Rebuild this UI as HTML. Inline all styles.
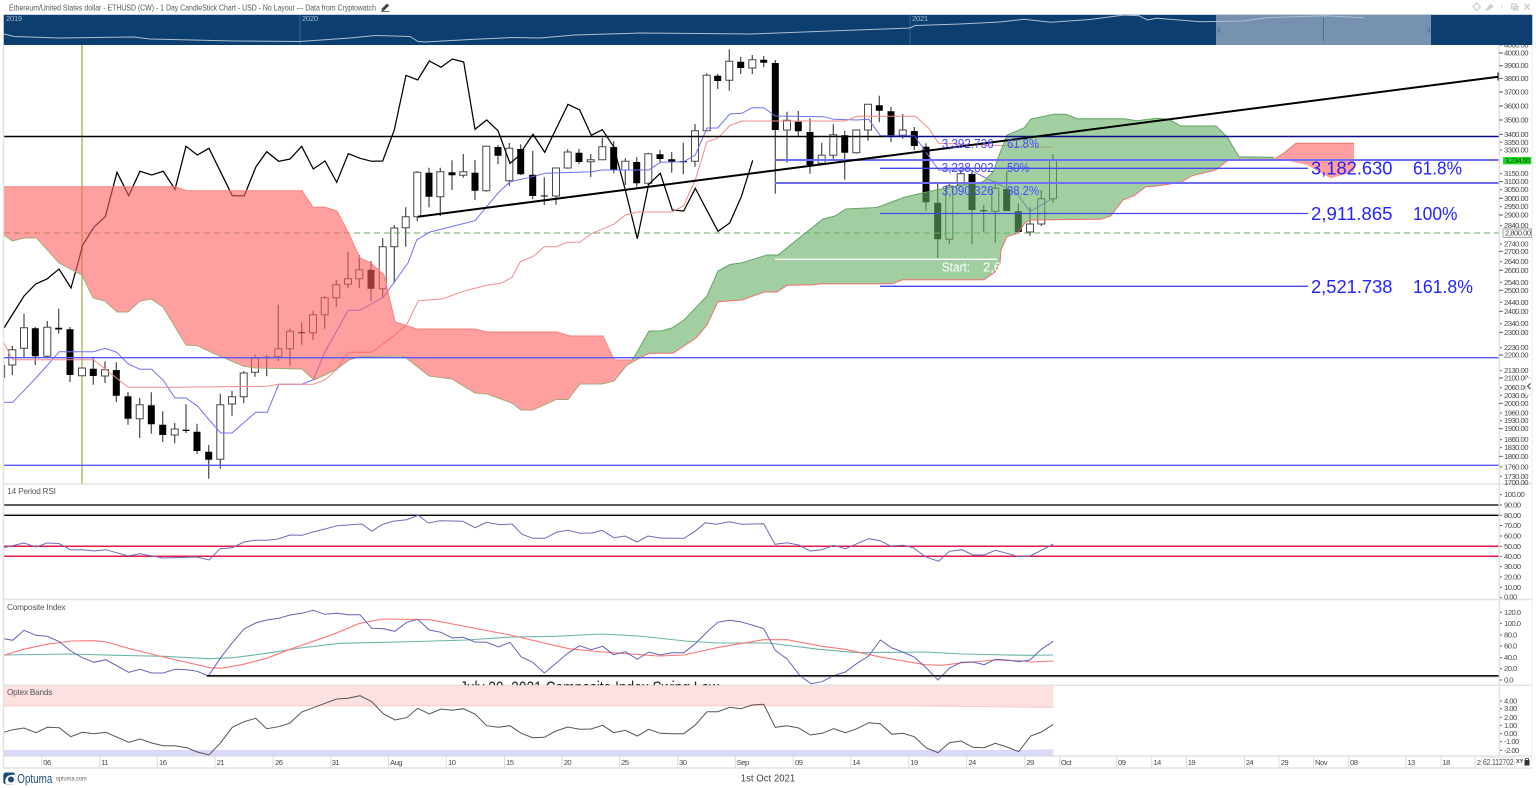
<!DOCTYPE html>
<html><head><meta charset="utf-8"><title>ETHUSD Chart</title>
<style>
html,body{margin:0;padding:0;background:#fff;width:1536px;height:788px;overflow:hidden}
svg{display:block;font-family:"Liberation Sans",sans-serif;filter:blur(.35px)}
text{dominant-baseline:central}
.ax{font-size:7.7px;letter-spacing:-.55px;fill:#4a4a4a}
.lb{font-size:8.2px;fill:#555;letter-spacing:-.2px}
.big{font-size:18.5px;fill:#2424ff}
.fib{font-size:13px;fill:#4a4aff}
</style></head><body>
<svg width="1536" height="788" viewBox="0 0 1536 788" xmlns="http://www.w3.org/2000/svg">
<defs><clipPath id="cp"><rect x="0" y="600" width="1536" height="85.3"/></clipPath></defs>
<rect width="1536" height="788" fill="#fff"/>

<!-- title -->
<text x="9" y="7.5" font-size="8.6" fill="#555" textLength="367" lengthAdjust="spacingAndGlyphs">Ethereum/United States dollar - ETHUSD (CW) - 1 Day CandleStick Chart - USD - No Layout --- Data from Cryptowatch</text>
<path d="M382 9L387 4l1.6 1.5-5 5H382zM381 11.6h8.4" fill="#444" stroke="#444" stroke-width=".7"/>

<!-- window icons -->
<g fill="none" stroke="#cfcfcf" stroke-width="1.2">
<path d="M1476.7 3l3.7 3.7-3.7 3.7-3.7-3.7z"/>
<path d="M1486 10l2.5-3 2-2.500 2.500 2-2.500 1.500-1.500 1.500z" fill="#cfcfcf"/>
<path d="M1502 4v5" stroke="#e4e4e4"/>
<path d="M1511.500 4h5v4.500h-5zM1513.500 6.500h4.500v3.500h-4.500z"/>
<path d="M1524.500 4l5 5.500M1529.500 4l-5 5.500" stroke-width="1.500"/>
</g>

<!-- olive vertical -->
<path d="M82 45V484" stroke="#c9c98c" stroke-width="2"/>

<!-- wicks -->
<path fill="none" stroke="#484848" stroke-width="1.200" d="M4.500 365V378M12.300 346V375M24 313.700V358M35.300 327V365M47.300 321V357M58.700 308.700V333.700M70 327V382M93.300 358V384.700M105 361.300V383M116.300 362.300V402M128 392V424.700M139.700 398V438M151.300 392.300V433.700M162.700 411.300V442M174.700 423V443.300M186 404.300V433M197 423.700V454M208.700 445V478.700M220.300 393.700V468.700M232 391V415.700M243.700 371V403.300M255 354.700V376.700M266.700 355.300V376.300M278.300 304.700V361M290 328.700V365.700M301.700 322.300V344.700M313 310.700V339.700M324.700 296.300V328.700M336.300 280.300V307M348 251.700V288M359.300 255V288M371 261V301M382.700 238.300V298M394.300 225V283M405.700 207.300V246.700M417.300 171V221M429 167.700V207.300M440.300 167.700V216M452 160.300V190M463.300 154V177.700M475 160V200M486.300 145.700V191.700M498 145V164.300M509.300 143V186M520.700 144.300V175M532.700 151V199M544.300 177.300V205M556 167.700V204.700M567.700 149.300V168.700M579 149V164M590.700 154V177M602.300 138V160M613.700 141V173.300M625.300 158.300V185M636.700 157.300V186.700M648.300 152.700V186.700M660 150V162.700M671.700 152V172.700M683.300 142.700V174.300M695 124V166.700M706.700 73.300V130.700M717.700 74V89M729.300 49.300V90.700M740.700 56.700V74M752.300 55V74M763.700 56V67.300M775.300 60V193.700M787 111.700V162.700M798.300 111V135.700M810 118.300V173.700M821.700 142.700V164.300M833.300 124.300V159.300M844.700 130.700V179.700M856.300 129.300V153.700M868 103.700V140.700M879.300 95.700V122.300M891 107V142M902.700 114V138.700M914.300 127V150M926 143.300V210.700M937.700 181.700V258M949.300 184V244M960.700 170V187M972 170V244.300M983.700 205V232.300M995.300 180.700V242.700M1006.700 171V211M1018.300 203.300V233.300M1030 207.300V235.700M1041.300 190V226M1053 154V202.700"/>
<!-- white bodies -->
<path fill="#fff" stroke="#484848" stroke-width="1" d="M8.800 349.700h7V365h-7zM20.500 327.700h7V348.300h-7zM43.800 327.300h7V356.300h-7zM78.500 368h7V375.700h-7zM101.500 369.700h7V376h-7zM136.200 404.700h7V418.700h-7zM171.200 429h7V435h-7zM216.800 404.700h7V459.300h-7zM228.500 396.700h7V404h-7zM240.200 373h7V396.700h-7zM251.500 358.300h7V372.300h-7zM274.800 348.700h7V356.700h-7zM286.500 331.300h7V348.700h-7zM309.500 314.700h7V332.700h-7zM321.200 297.700h7V314.700h-7zM332.800 284.700h7V297.700h-7zM344.500 278.700h7V284.300h-7zM355.800 269.700h7V278.700h-7zM379.200 246.700h7V288.700h-7zM390.800 228h7V246.700h-7zM402.200 216.700h7V227.700h-7zM413.800 172.300h7V216.700h-7zM436.800 171.700h7V196.700h-7zM459.800 171.700h7V175.300h-7zM482.800 146.300h7V190.700h-7zM505.800 148.300h7V180.700h-7zM552.500 168h7V196h-7zM564.200 152h7V168h-7zM587.200 159.700h7V161.700h-7zM598.800 146.700h7V159.700h-7zM621.800 161.300h7V170h-7zM644.800 153.700h7V183.300h-7zM691.500 130.700h7V161.300h-7zM703.200 75.300h7V130.700h-7zM725.800 61.300h7V80.300h-7zM748.800 59.700h7V68h-7zM783.500 120.300h7V130h-7zM818.200 155.300h7V163.300h-7zM829.800 134.700h7V155.300h-7zM852.800 130h7V152.700h-7zM864.500 104.300h7V130h-7zM899.200 130h7V135.300h-7zM945.800 186h7V239.300h-7zM957.200 173.700h7V185h-7zM991.800 188.300h7V211.300h-7zM1026.500 224h7V232h-7zM1037.800 198.700h7V224h-7zM1049.500 160.300h7V198.700h-7z"/>
<!-- black bodies -->
<path fill="#000" d="M31.800 328.300h7V356.300h-7zM55.200 327.700h7V329.500h-7zM66.500 329.300h7V375h-7zM89.800 368.700h7V376h-7zM112.800 370h7V395.700h-7zM124.500 396.300h7V418.700h-7zM147.800 405.300h7V424.300h-7zM159.200 424.700h7V435h-7zM182.500 429.700h7V431h-7zM193.500 431.700h7V451h-7zM205.200 451.700h7V459.700h-7zM263.200 356.700h7V358.300h-7zM298.200 332h7V333.200h-7zM367.500 269.700h7V288.700h-7zM425.500 172.700h7V196.700h-7zM448.500 172.300h7V175.300h-7zM471.500 172.700h7V190.700h-7zM494.500 147h7V155.700h-7zM517.200 149h7V174.300h-7zM529.200 174.700h7V196h-7zM540.800 195.500h7V196.500h-7zM575.500 152.700h7V162h-7zM610.200 147h7V170h-7zM633.200 162h7V183.300h-7zM656.500 154.300h7V159h-7zM668.200 159.300h7V162.300h-7zM679.800 161h7V162.200h-7zM714.200 75.700h7V81h-7zM737.200 61.700h7V68h-7zM760.200 59.700h7V62.700h-7zM771.800 63h7V130h-7zM794.800 121.700h7V131.300h-7zM806.500 132h7V165h-7zM841.200 135.300h7V152.700h-7zM875.800 105.300h7V110.700h-7zM887.500 111.300h7V135.700h-7zM910.800 131h7V146h-7zM922.500 146.700h7V202.300h-7zM934.200 202.700h7V239.300h-7zM968.500 174h7V210h-7zM980.200 210h7V211.300h-7zM1003.200 189h7V211h-7zM1014.800 211.300h7V232h-7z"/>

<!-- ichimoku lines (beneath cloud) -->
<path d="M4 233H1499" stroke="#66a866" stroke-width="1" stroke-dasharray="6 4" fill="none"/>
<polyline fill="none" stroke="#000" stroke-width="1.250" stroke-linejoin="miter" points="4,328 24,296 35.700,284 47,279 59,269 71,288 78,263 82.700,245 94.300,226.700 105.300,216.700 117,172.300 128.700,195.700 140,171.300 151.700,175 163.300,171.300 175,189.300 186,146.300 197.300,155 209,148.300 232.300,195.700 244.300,195.700 256,166.700 266.700,151.700 278.700,161.300 290,159 301.700,146.300 313.300,169 325,161 336.700,182.300 348.300,153.700 360,158.300 371.700,161.300 382.700,161 394.300,130 406,75.300 417.700,80 429.300,61 441,67.300 452.300,59 463.700,62 475,129.300 486.700,120 498,130.700 510,163.300 518,156.700 533,134.300 544.700,152.300 568,104.300 579.700,110 591.300,135.300 602.300,129.700 613.700,146.700 625.300,190 637.300,238.700 648.700,184.300 660.300,173.300 672.300,210 683.700,211 695.300,188.300 718,231.300 729.700,223 741.300,196.700 752.700,160.300"/>
<polyline fill="none" stroke="#6f6ffa" stroke-width="1" points="4,402.300 12.700,402.300 36,378 59.300,351.700 93.300,351.700 105.300,348.300 116.700,352.300 128.300,364 140,369.300 151.700,369.300 163.300,380.300 175,398 186,398 197.700,406.300 209,419.700 220.700,433 232,433 255.700,412.300 267.300,412.300 278.700,384.300 301.700,384.300 313.300,379.700 325,352 348.300,310.300 360,310.300 383.300,297.300 408,263 416.700,240 430,232 475,220.700 498.300,192.700 510,181.700 528.700,177.700 545.300,173.300 592,171.700 602,170 648.700,170 660.300,162.300 683.700,161.700 695.300,155 707,128 717.700,128 729.700,114 742,113.300 752,107.700 763.700,107.700 775.300,116 823.700,116.700 833.700,119.300 857,120 868.700,119.300 880.300,135.700 914.300,135.700 938.700,170 970,170 996.700,183.300 1016.700,193 1030,211.700 1053,198"/>
<polyline fill="none" stroke="#f58a8a" stroke-width="1" points="4,343 12.700,359.700 93.300,359.700 128.300,387.300 175,387.300 267,386.300 278.300,384.300 313.300,384.300 325,379.700 336.700,369.700 348.300,352.300 371.700,352.300 393.300,336.300 406.700,324.700 418.300,300.700 441.700,299 463.300,291.300 486.700,285.300 501.700,283 512,277.300 520.300,261.700 532.700,256.700 544.300,246.700 556,246.700 567.700,242.300 579.700,242.300 592,233.300 613.700,224.300 625.300,215 637.300,212 672,212 683.700,205.700 695.300,180 707,141.700 717.700,138.300 729.700,125.700 742,121 845.300,121 857,116.300 915.300,116.300 928.700,128.300 938.700,143.300 1037,147 1053,147.300"/>

<!-- clouds -->
<path fill="rgb(255,95,95)" fill-opacity=".6" d="M4 186.700L175 186.700 187 190.700 302 190.700 313 207.300 325 207.300 337 211 348 232 360 258 371 263 384 275 395 321.700 405.700 325.300 417 329 475 329 487 332 557 332 570 336 603 336 614 360 632 360 640 358 627 365 614 381 602 384 580 384 568 399.500 556 399.500 533 410 521 410 512 403 487 394 475 393 452 379 429 376 405 357 400 356 360 356.700 349 360 337 369 325 375 314 380 302 369 255 368 243 366 213 353 197 345.600 186 345 163 307 151 299 140 301 128 312 117 312 105 301 93 298 82 275 59 263 36.700 238 24 238 12.300 241 4 235z"/>
<path fill="rgb(100,175,100)" fill-opacity=".6" d="M632 360L636 354 649 331 661 331 672 328 684 320 707 296 718 271 730 264.500 742 262.700 767 255 778 255 823 219 835 216 846 209 877 207.500 905 197 927 192 972 183 983 182 993 172 1000 153 1007 135 1024 128 1031 119 1054 114.300 1066 114.300 1077 118.700 1124 118.700 1137 120.700 1157 118.300 1169 119.300 1181 126 1216 126 1227 136.700 1239 156.700 1274 157.300 1274 159.300 1237 159.300 1227 161 1215.700 170 1192 175.700 1180.700 182.300 1157 186 1145.700 186.700 1134 195.700 1123 200 1110.700 216 1100.700 219.300 1030 220 1025 223 1018 233 1007 236.700 1001 250 1000 263 995 272 984 279.700 903 279.700 892 283.700 822 283.700 812 284.700 787 285.300 777 292 764 292 742 300 718 301.700 707 325 696 338 673 353.300 649 353.300 640 358z"/>
<path fill="rgb(255,95,95)" fill-opacity=".6" d="M1274 159L1284 153 1296 143.300 1354 143.300 1354 171.700 1330.700 178.300 1307 165 1284 160z"/>
<!-- cloud edges -->
<g fill="none" stroke-width="1">
<polyline stroke="#f98080" points="4,186.700 175,186.700 187,190.700 302,190.700 313,207.300 325,207.300 337,211 348,232 360,258 371,263 384,275 395,321.700 405.700,325.300 417,329 475,329 487,332 557,332 570,336 603,336 614,360 632,360"/>
<polyline stroke="#a9a878" points="4,235 12.300,241 24,238 36.700,238 59,263 82,275 93,298 105,301 117,312 128,312 140,301 151,299 163,307 186,345 197,345.600 213,353 243,366 255,368 302,369 314,380 325,375 337,369 349,360 360,356.700 400,356 405,357 429,376 452,379 475,393 487,394 512,403 521,410 533,410 556,399.500 568,399.500 580,384 602,384 614,381 627,365 640,358"/>
<polyline stroke="#62a562" points="632,360 636,354 649,331 661,331 672,328 684,320 707,296 718,271 730,264.500 742,262.700 767,255 778,255 823,219 835,216 846,209 877,207.500 905,197 927,192 972,183 983,182 993,172 1000,153 1007,135 1024,128 1031,119 1054,114.300 1066,114.300 1077,118.700 1124,118.700 1137,120.700 1157,118.300 1169,119.300 1181,126 1216,126 1227,136.700 1239,156.700 1274,157.300"/>
<polyline stroke="#f56e6e" points="640,358 649,353.300 673,353.300 696,338 707,325 718,301.700 742,300 764,292 777,292 787,285.300 812,284.700 822,283.700 892,283.700 903,279.700 984,279.700 995,272 1000,263 1001,250 1007,236.700 1018,233 1025,223 1030,220 1100.700,219.300 1110.700,216 1123,200 1134,195.700 1145.700,186.700 1157,186 1180.700,182.300 1192,175.700 1215.700,170 1227,161 1237,159.300 1274,159.300 1284,153 1296,143.300 1354,143.300"/>
</g>

<!-- horizontal levels -->
<path d="M4 136.500H885" stroke="#000" stroke-width="1.600"/>
<path d="M885 136.500H1499" stroke="#0a0a8c" stroke-width="1.600"/>
<path d="M775 160H1499M775 183H1499" stroke="#6d6df5" stroke-width="2"/>
<path d="M880 168.300H1308M880 213.500H1308M880 286.300H1308" stroke="#4646f0" stroke-width="1.300"/>
<path d="M4 357.700H1499M4 465.300H1499" stroke="#5a5aff" stroke-width="1.300"/>
<path d="M775 259.300H997" stroke="#fff" stroke-width="1.300"/>

<!-- trendline -->
<path d="M417.700 216.700L1498.300 76.700" stroke="#000" stroke-width="2" fill="none"/>
<path d="M1498.300 72.500V80.500" stroke="#000" stroke-width="1.600"/>

<!-- fib labels -->
<text class="fib" x="941.700" y="143.300" textLength="52" lengthAdjust="spacingAndGlyphs">3,392.736</text>
<text class="fib" x="1007" y="143.300" textLength="32" lengthAdjust="spacingAndGlyphs">61.8%</text>
<text class="fib" x="941.700" y="167.300" textLength="52" lengthAdjust="spacingAndGlyphs">3,238.002</text>
<text class="fib" x="1007" y="167.300" textLength="22.500" lengthAdjust="spacingAndGlyphs">50%</text>
<text class="fib" x="941.700" y="190.500" textLength="52" lengthAdjust="spacingAndGlyphs">3,090.326</text>
<text class="fib" x="1007" y="190.500" textLength="32" lengthAdjust="spacingAndGlyphs">38.2%</text>
<text x="941.700" y="267" font-size="13" fill="#fff" textLength="28.500" lengthAdjust="spacingAndGlyphs">Start:</text>
<text x="983" y="267" font-size="13" fill="#fff">2,6</text>
<text class="big" x="1311" y="168" textLength="81.500" lengthAdjust="spacingAndGlyphs">3,182.630</text>
<text class="big" x="1413" y="168" textLength="49" lengthAdjust="spacingAndGlyphs">61.8%</text>
<text class="big" x="1311" y="213.500" textLength="81.500" lengthAdjust="spacingAndGlyphs">2,911.865</text>
<text class="big" x="1413" y="213.500" textLength="44.500" lengthAdjust="spacingAndGlyphs">100%</text>
<text class="big" x="1311" y="286.300" textLength="81.500" lengthAdjust="spacingAndGlyphs">2,521.738</text>
<text class="big" x="1413" y="286.300" textLength="60" lengthAdjust="spacingAndGlyphs">161.8%</text>

<!-- RSI pane -->
<path d="M4 484H1532M4 599.500H1532M4 685.300H1532" stroke="#e3e3e3" stroke-width="1.500"/>
<path d="M4 505H1499" stroke="#444" stroke-width="1.800"/>
<path d="M4 514.300H1499" stroke="#cfcfcf" stroke-width="1"/>
<path d="M4 515.400H1499" stroke="#000" stroke-width="1.300"/>
<path d="M4 546.300H1499M4 556.300H1499" stroke="#e8174a" stroke-width="1.500"/>
<polyline fill="none" stroke="#6d6db9" stroke-width="1" points="4,547.700 24,543 36,547 47,543 59,543.500 71,550 82,549.700 94,551 106,549.700 128,556 140,553.700 163,558 197,557 209,560 220,548.700 232,547.700 244,542 255,540.300 267,540.300 278,539 290,535 302,535.300 313,532 325,529 337,525.700 361.700,524 372,531.300 381.700,524.700 393,521.300 406.700,519.700 418.300,515.300 428.300,523 440,520.700 463,521.300 475,527.700 486.700,522.300 500,524.700 512,524 522,534.300 533,538.300 545,538.300 557,532 568,530.300 580,533.300 592,533 602,530.300 614,537.700 625,536 637,542 648,536 660,538 672,538.300 684,538.300 695,531.300 705.300,522.700 716,524.300 729.300,521.700 742,524.300 763.700,523.700 775,544.300 787,542.700 798.700,545 810.300,551 822,549.700 833.700,545.300 845.300,548.700 857,543.700 868.700,538.700 880.300,540.700 890.300,546 903.700,545.300 913.700,548 925.300,556.700 938.700,561.300 949.300,551.300 962,549.700 972.700,555 984.300,555 995.300,550.300 1007,553.300 1018.700,556.700 1030,556 1041.300,550.300 1053.300,544"/>
<text class="lb" x="7.300" y="491.700">14 Period RSI</text>

<!-- Composite pane -->
<polyline fill="none" stroke="#6ab5a8" stroke-width="1.100" points="4,655 70,654 116.700,655.300 163.300,656.300 210,658.700 233.300,657.700 266.700,653.300 300,648 340,643.300 400,642 466.700,640 512,637 555.300,636.300 602,634 638.700,636 685.300,641 718.700,643 768.700,643 818.700,649.300 858.700,652.700 925.300,652 962,654 1024,655.300 1053,655"/>
<polyline fill="none" stroke="#f77" stroke-width="1.100" points="4,655.300 23.300,649.300 46.700,644.300 71.700,641 93.300,640.700 106.700,642 128.300,648.300 163.300,657 210,667.700 221.700,668.300 243.300,664.300 266.700,658.300 290,649.300 333.300,634.300 360,623.300 383.300,619 430,619.700 510,635 568.700,648.700 592,651 612,652.700 658.700,656 683.700,655 718.700,647.300 763.700,639.700 787,639.700 822,646.300 845.300,649.300 878.700,656.700 925.300,664.700 942,665.300 960.300,663 995.300,660 1024,661 1030.700,662 1053.300,661"/>
<polyline fill="none" stroke="#6464b8" stroke-width="1" points="4,638.700 12.700,640.300 24,630.300 36,635.300 47.300,636.300 59.300,641.700 70.700,651 82.300,657.700 94,662.300 105.700,659.700 117.300,666 128.700,672.300 140,669.300 151.700,673 163.300,673 175,669.300 186.700,669.700 197.300,671.300 208.300,676 220.700,657.700 232.300,642.700 244,629 255.700,623 266.700,620 278.700,618.300 290,615 301.700,613.300 313.300,610.300 325,614.300 336.700,613.300 348.300,614.700 360,614.700 371.700,628.300 383.300,628.700 395,631.300 406.700,622.300 417.700,619.300 429.300,630 441,632.300 452.300,638 463.300,637.300 475,642 486.700,642.300 498.300,647 510,642.300 521.300,657 532.700,662.300 544.300,673 556,663.300 567.700,653.300 579.700,645.700 591,649.700 602.700,646.300 613.700,654.700 625.300,651.700 637.300,659.300 648.700,652 660.300,655 672,652.700 683.700,652.700 695.300,643.700 707,632 717.700,622.300 729.700,620.300 740.300,621.700 752,625 763.700,628.700 775.300,650.300 787,659 800.300,676 811,683.700 822,681.700 833.700,675.700 845.300,672 857,663.300 868.700,656 880.300,640 892,648 902.700,652 914.300,657 926.300,668 938,680 949.300,668.300 961,662.300 972.700,662 984.300,664.700 995.300,659.300 1007,660 1018.700,661.700 1030,660 1041.300,649.300 1053.300,641.300"/>
<path d="M206.700 675.700H1499" stroke="#111" stroke-width="1.500"/>
<path d="M206.700 676.900H1499" stroke="#aaa" stroke-width=".8"/>
<text class="lb" x="7" y="607.300">Composite Index</text>
<g clip-path="url(#cp)"><text x="460" y="687.500" font-size="17.500" fill="#222" textLength="259" lengthAdjust="spacingAndGlyphs">July 20, 2021 Composite Index Swing Low</text></g>

<!-- Optex pane -->
<path d="M4 685.800H1053.300V707.200L900 705.500H4z" fill="#fde0e0"/>
<path d="M4 705.700H900L1053.300 707.400" fill="none" stroke="#fbc8c8" stroke-width="1"/>
<path d="M4 750H1020L1053.300 749.300V756H4z" fill="#d9d9fa"/>
<polyline fill="none" stroke="#555" stroke-width="1" points="4,732.300 12.700,729.700 24,728 36,732.700 47.300,727.300 59.300,727.700 70.700,736.700 82.300,732.300 94,733.700 105.700,732.300 117.300,737.300 128.700,742.300 140,739 151.700,743 163.300,745.700 175,745.700 186.700,747.700 197.300,752 209,755 220.700,742.700 232.300,727.300 244,721.700 255.700,718.300 266.700,728.700 278.700,726.700 290,723 301.700,712 313.300,707.700 325,703.300 336.700,699 348.300,698.300 360,695.700 371.700,701.700 383.300,713.700 395,720 406.700,717.700 417.700,708.300 429.300,714 441,709 452.300,710.300 463.300,708.700 475,714 486.700,725.700 498.300,727.300 510,725.700 521.300,733.300 532.700,737.700 544.300,737.300 556,731 567.700,727 579.700,729.300 591,729 602.700,725.300 613.700,732.700 625.300,730.300 637.300,736 648.700,729.300 660.300,733.300 672,733.700 683.700,733.700 695.300,725 707,711.700 717.700,711.700 729.700,707.300 741,708.700 752,705 763.700,704.300 775.300,727.300 787,725.700 798.700,728 810.300,735 822,733.300 833.700,728.700 845.300,732.700 857,728.700 868.700,722.700 880.300,723.700 892,734.300 902.700,733.300 914.300,736.700 926.300,748 938,752.700 949.300,742.700 961,741 972.700,747.300 984.300,747.700 995.300,743.300 1007,747 1018.700,751.700 1030.700,736 1041.300,732 1053.300,724.300"/>
<text class="lb" x="7" y="692.700">Optex Bands</text>

<!-- frame -->
<path d="M3.500 45V768" stroke="#e2e2e2" stroke-width="1.500"/>
<path d="M1499.300 45V756" stroke="#e2e2e2" stroke-width="1.500"/>
<path d="M1532 45V768" stroke="#ececec" stroke-width="1"/>
<path d="M4 756H1532M4 768H1532" stroke="#dcdcdc" stroke-width="1.300"/>

<!-- axis ticks -->
<path stroke="#555" stroke-width=".9" fill="none" d="M1499 53h4M1499 65.700h4M1499 78.300h4M1499 92h4M1499 106h4M1499 120h4M1499 134.300h4M1499 181.700h4M1499 198.300h4M1499 215h4M1499 251.300h4M1499 270.300h4M1499 290.300h4M1499 311.300h4M1499 332.300h4M1499 355h4M1499 378h4M1499 403.300h4M1499 428.700h4M1499 456.300h4"/>
<path stroke="#555" stroke-width=".9" fill="none" d="M1500 45h2M1500 142.300h2M1500 150h2M1500 173.700h2M1500 189.700h2M1500 206.700h2M1500 225.700h2M1500 244h2M1500 261.700h2M1500 282.300h2M1500 302.300h2M1500 323.700h2M1500 347.700h2M1500 370.700h2M1500 387.700h2M1500 395.300h2M1500 413h2M1500 420.700h2M1500 439.700h2M1500 447.700h2M1500 467h2M1500 476.300h2M1500 494.700h2M1500 505h2M1500 515.300h2M1500 525.500h2M1500 536h2M1500 546.300h2M1500 556.300h2M1500 566.700h2M1500 577h2M1500 587.300h2M1500 597.700h2M1500 612.300h2M1500 623.300h2M1500 635h2M1500 646h2M1500 657.700h2M1500 668.700h2M1500 680h2M1500 701h2M1500 708.700h2M1500 717.300h2M1500 725.300h2M1500 733.700h2M1500 741.700h2M1500 750.300h2"/>

<!-- price labels -->
<g class="ax">
<text x="1504" y="45">4000.00</text><text x="1504" y="53">4000.00</text><text x="1504" y="65.700">3900.00</text><text x="1504" y="78.300">3800.00</text><text x="1504" y="92">3700.00</text><text x="1504" y="106">3600.00</text><text x="1504" y="120">3500.00</text><text x="1504" y="134.300">3400.00</text><text x="1504" y="142.300">3350.00</text><text x="1504" y="150">3300.00</text><text x="1504" y="173.700">3150.00</text><text x="1504" y="181.700">3100.00</text><text x="1504" y="189.700">3050.00</text><text x="1504" y="198.300">3000.00</text><text x="1504" y="206.700">2950.00</text><text x="1504" y="215">2900.00</text><text x="1504" y="225.700">2840.00</text><text x="1504" y="244">2740.00</text><text x="1504" y="251.300">2700.00</text><text x="1504" y="261.700">2640.00</text><text x="1504" y="270.300">2600.00</text><text x="1504" y="282.300">2540.00</text><text x="1504" y="290.300">2500.00</text><text x="1504" y="302.300">2440.00</text><text x="1504" y="311.300">2400.00</text><text x="1504" y="323.700">2340.00</text><text x="1504" y="332.300">2300.00</text><text x="1504" y="347.700">2230.00</text><text x="1504" y="355">2200.00</text><text x="1504" y="370.700">2130.00</text><text x="1504" y="378">2100.00</text><text x="1504" y="387.700">2060.00</text><text x="1504" y="395.300">2030.00</text><text x="1504" y="403.300">2000.00</text><text x="1504" y="413">1960.00</text><text x="1504" y="420.700">1930.00</text><text x="1504" y="428.700">1900.00</text><text x="1504" y="439.700">1860.00</text><text x="1504" y="447.700">1830.00</text><text x="1504" y="456.300">1800.00</text><text x="1504" y="467">1760.00</text><text x="1504" y="476.300">1730.00</text><text x="1504" y="482.500">1700.00</text>
<text x="1504" y="494.700">100.00</text><text x="1504" y="505">90.00</text><text x="1504" y="515.300">80.00</text><text x="1504" y="525.500">70.00</text><text x="1504" y="536">60.00</text><text x="1504" y="546.300">50.00</text><text x="1504" y="556.300">40.00</text><text x="1504" y="566.700">30.00</text><text x="1504" y="577">20.00</text><text x="1504" y="587.300">10.00</text><text x="1504" y="597">0.00</text>
<text x="1504" y="612.300">120.0</text><text x="1504" y="623.300">100.0</text><text x="1504" y="635">80.0</text><text x="1504" y="646">60.0</text><text x="1504" y="657.700">40.0</text><text x="1504" y="668.700">20.0</text><text x="1504" y="680">0.0</text>
<text x="1504" y="701">4.00</text><text x="1504" y="708.700">3.00</text><text x="1504" y="717.300">2.00</text><text x="1504" y="725.300">1.00</text><text x="1504" y="733.700">0.00</text><text x="1504" y="741.700">-1.00</text><text x="1504" y="750.300">-2.00</text>
</g>
<rect x="1503" y="157" width="28.300" height="7.400" fill="#1fdf1f"/>
<text x="1505" y="160.700" font-size="7.500" letter-spacing="-.55" fill="#0a3a0a">3,234.50</text>
<rect x="1503" y="229" width="28.300" height="8.300" fill="#fff" stroke="#888" stroke-width=".8"/>
<text x="1505" y="233.200" font-size="7.700" letter-spacing="-.55" fill="#444">2,800.00</text>
<rect x="1525.700" y="378" width="6.300" height="16.700" fill="#fff" stroke="#e4e4e4" stroke-width=".8"/>
<path d="M1530.500 383.500l-3 2.800 3 2.800" fill="none" stroke="#555" stroke-width="1.200"/>

<!-- navigator (drawn last so it clips the top axis label) -->
<rect x="3.700" y="14" width="1528.600" height="1" fill="#c9d3dd"/>
<rect x="3.700" y="15" width="1528.600" height="30" fill="#0c3e70"/>
<rect x="1216" y="15" width="215" height="30" fill="#7692b0"/>
<path d="M300 15v30M910 15v30" stroke="#3c6690" stroke-width="1"/>
<path d="M1323.500 18v23" stroke="#4f6f91" stroke-width="1"/>
<path d="M1218 27v6M1219.500 27v6M1428 27v6M1429.500 27v6" stroke="#5b7a9c" stroke-width="1"/>
<polyline fill="none" stroke="#aebfd0" stroke-width="1" points="4,34 14,36.500 60,38 134,37 150,39 234,41 300,41.500 350,38 375,35.500 410,36.500 418,41.500 425,42 470,39.500 512,37.500 540,38 575,35 640,33 700,33.500 750,34 830,31 910,28 915,25.500 960,24 1000,22 1024,19.300 1050.700,22.300 1090,19.500 1124,15 1139,15.700 1147.300,20 1157,18.300 1200.700,21.700 1242,21 1267,17.700 1324,15.700 1364,17.700"/>
<text x="6" y="18.700" font-size="7.700" fill="#a9bccf" letter-spacing="-.3">2019</text>
<text x="302" y="18.700" font-size="7.700" fill="#a9bccf" letter-spacing="-.3">2020</text>
<text x="912" y="18.700" font-size="7.700" fill="#a9bccf" letter-spacing="-.3">2021</text>

<!-- date axis -->
<path stroke="#dcdcdc" stroke-width="1" d="M41.700 756v12M99.700 756v12M157.300 756v12M215 756v12M273 756v12M330.700 756v12M388.500 756v12M446.300 756v12M504.500 756v12M562 756v12M619.500 756v12M677.700 756v12M735.300 756v12M793.300 756v12M850.700 756v12M908.700 756v12M966.700 756v12M1024.700 756v12M1059.700 756v12M1116.700 756v12M1151.700 756v12M1186.500 756v12M1244.500 756v12M1279 756v12M1313.700 756v12M1348.700 756v12M1406 756v12M1441 756v12M1475 756v12"/>
<g class="ax">
<text x="43.300" y="762.300">06</text><text x="101" y="762.300">11</text><text x="159" y="762.300">16</text><text x="216.700" y="762.300">21</text><text x="275" y="762.300">26</text><text x="331.700" y="762.300">31</text><text x="390" y="762.300">Aug</text><text x="448" y="762.300">10</text><text x="506" y="762.300">15</text><text x="563.700" y="762.300">20</text><text x="621" y="762.300">25</text><text x="679" y="762.300">30</text><text x="736.700" y="762.300">Sep</text><text x="795" y="762.300">09</text><text x="852.300" y="762.300">14</text><text x="910.300" y="762.300">19</text><text x="968.300" y="762.300">24</text><text x="1026.300" y="762.300">29</text><text x="1060.700" y="762.300">Oct</text><text x="1118" y="762.300">09</text><text x="1153.300" y="762.300">14</text><text x="1187.700" y="762.300">19</text><text x="1245.700" y="762.300">24</text><text x="1280.700" y="762.300">29</text><text x="1315" y="762.300">Nov</text><text x="1350" y="762.300">08</text><text x="1407.300" y="762.300">13</text><text x="1442.300" y="762.300">18</text><text x="1476.700" y="762.300">2</text>
</g>
<rect x="1481" y="757" width="51" height="10.500" fill="#fff"/>
<rect x="1481.500" y="757.500" width="33" height="10" fill="#fff" stroke="#e8e8e8" stroke-width=".8"/>
<text x="1483" y="762.300" font-size="8" fill="#444" textLength="30.500" lengthAdjust="spacingAndGlyphs">62.112702</text>
<text x="1516" y="762" font-size="5.500" fill="#444" font-weight="bold">XY</text>
<path d="M1524.500 760h5v5.500h-5z" fill="#333"/><path d="M1525.500 760v-1.500h3v1.500" fill="none" stroke="#333" stroke-width=".8"/>

<!-- footer -->
<text x="768" y="778.300" font-size="10.500" fill="#444" text-anchor="middle" textLength="54.500" lengthAdjust="spacingAndGlyphs">1st Oct 2021</text>
<rect x="3.300" y="772.500" width="12" height="11.700" rx="2.500" fill="#1a4a7a"/>
<path d="M6 784a6 6 0 0 1 5-9l4.300-.5v9.700z" fill="#fff"/>
<circle cx="11" cy="779.500" r="3" fill="#1a4a7a"/>
<text x="17.300" y="778.300" font-size="13" fill="#1f4f7f" textLength="35" lengthAdjust="spacingAndGlyphs">Optuma</text>
<text x="55.700" y="779" font-size="6.500" fill="#666" textLength="31" lengthAdjust="spacingAndGlyphs">optuma.com</text>
</svg>
</body></html>
